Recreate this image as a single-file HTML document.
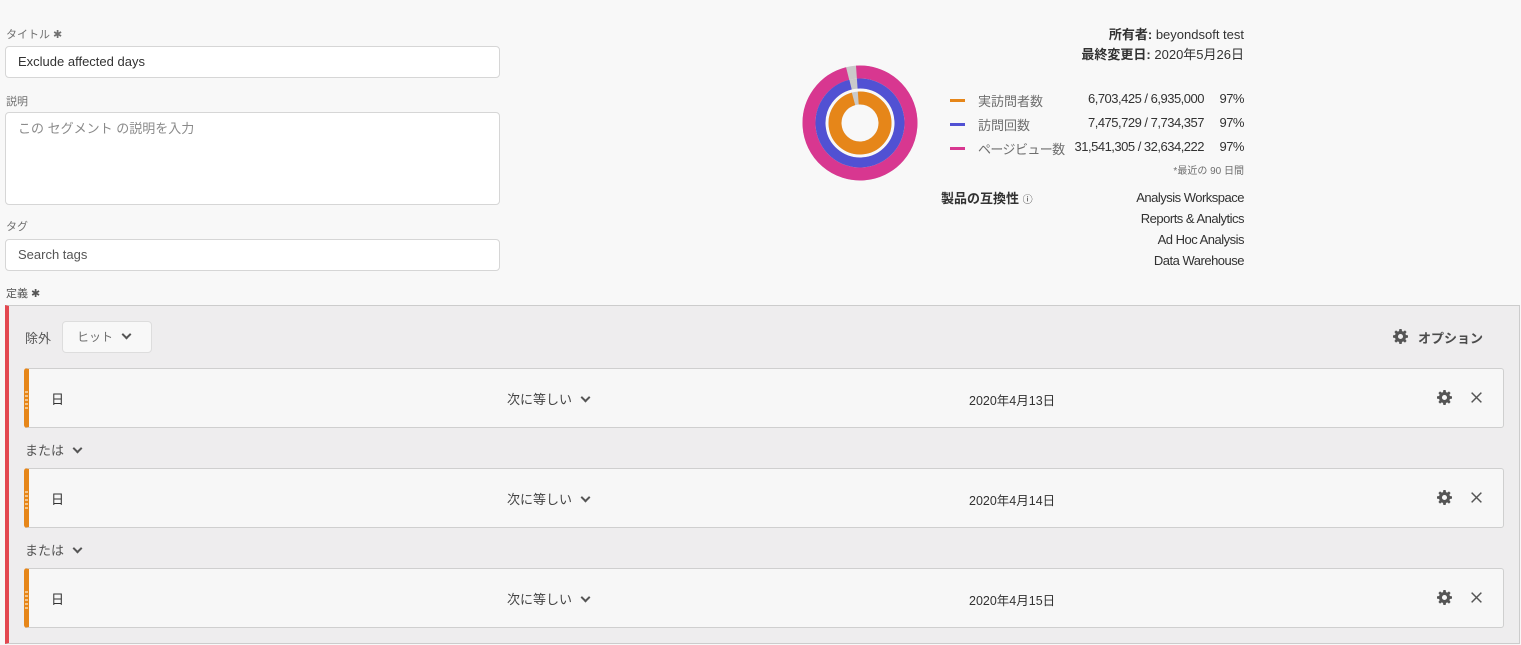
<!DOCTYPE html>
<html><head><meta charset="utf-8"><style>
*{box-sizing:border-box;margin:0;padding:0}
body{width:1521px;height:645px;background:#f8f8f8;font-family:"Liberation Sans","Noto Sans CJK JP",sans-serif;color:#323232;position:relative;overflow:hidden;font-size:13px}
.a{position:absolute}
.lbl{font-size:11px;color:#707070}
.inp{position:absolute;left:5px;width:495px;background:#fff;border:1px solid #d6d6d6;border-radius:4px;font-size:13px;padding-left:12px}
.r{text-align:right}
.n{font-size:13px;letter-spacing:-0.5px}
.box{position:absolute;left:5px;top:305px;width:1515px;height:339px;background:#eeedee;border:1px solid #ccc;border-left:4px solid #e34850}
.row{position:absolute;left:15px;width:1480px;height:60px;background:#f7f7f7;border:1px solid #cfcfcf;border-radius:3px;border-left:5px solid #e68619}
.row .d{position:absolute;left:-4px;top:20px;width:3px;height:20px;background:repeating-linear-gradient(#e68619 0 2px,#f4c48a 2px 4px)}
.row span{position:absolute;top:20px;font-size:13px}
.row svg{position:absolute;top:21px}
.chev{display:inline-block;width:7px;height:7px;border-right:2px solid #555;border-bottom:2px solid #555;transform:rotate(45deg);margin-left:10px;position:relative;top:-3px}
</style></head><body>
<svg width="0" height="0" style="position:absolute"><defs>
<symbol id="g" viewBox="0 0 16 16"><path fill="#555" d="M6.8 0h2.4l.4 2.2 1.3.6 1.9-1.3 1.7 1.7-1.3 1.9.6 1.3 2.2.4v2.4l-2.2.4-.6 1.3 1.3 1.9-1.7 1.7-1.9-1.3-1.3.6-.4 2.2H6.8l-.4-2.2-1.3-.6-1.9 1.3-1.7-1.7 1.3-1.9-.6-1.3L0 9.2V6.8l2.2-.4.6-1.3-1.3-1.9 1.7-1.7 1.9 1.3 1.3-.6zM8 5.3a2.7 2.7 0 100 5.4 2.7 2.7 0 000-5.4z"/></symbol>
<symbol id="x" viewBox="0 0 16 16"><path stroke="#555" stroke-width="1.8" d="M2 2l12 12M14 2L2 14"/></symbol>
</defs></svg>
<div class="a lbl" style="left:6px;top:26px">タイトル ✱</div>
<div class="inp" style="top:46px;height:32px;line-height:30px">Exclude affected days</div>
<div class="a lbl" style="left:6px;top:93px">説明</div>
<div class="inp" style="top:112px;height:93px;padding-top:5px;color:#8a8a8a">この セグメント の説明を入力</div>
<div class="a lbl" style="left:6px;top:218px">タグ</div>
<div class="inp" style="top:239px;height:32px;line-height:30px;color:#555">Search tags</div>
<div class="a lbl" style="left:6px;top:285px;color:#555">定義 ✱</div>

<svg class="a" style="left:800px;top:63px" width="120" height="120" viewBox="0 0 120 120">
<g transform="rotate(-94 60 60)" fill="none">
<circle cx="60" cy="60" r="51" stroke="#cacaca" stroke-width="13"/>
<circle cx="60" cy="60" r="51" stroke="#d83790" stroke-width="13" stroke-dasharray="311 400"/>
<circle cx="60" cy="60" r="39.5" stroke="#cacaca" stroke-width="10"/>
<circle cx="60" cy="60" r="39.5" stroke="#5151d3" stroke-width="10" stroke-dasharray="241 400"/>
<circle cx="60" cy="60" r="25" stroke="#cacaca" stroke-width="13"/>
<circle cx="60" cy="60" r="25" stroke="#e68619" stroke-width="13" stroke-dasharray="152 400"/>
</g></svg>

<div class="a r" style="right:277px;top:24px;font-size:13px"><b>所有者:</b> beyondsoft test</div>
<div class="a r" style="right:277px;top:44px;font-size:13px"><b>最終変更日:</b> 2020年5月26日</div>
<div class="a" style="left:950px;top:99px;width:15px;height:3px;background:#e68619"></div>
<div class="a" style="left:950px;top:123px;width:15px;height:3px;background:#5151d3"></div>
<div class="a" style="left:950px;top:147px;width:15px;height:3px;background:#d83790"></div>
<div class="a" style="left:978px;top:91px;color:#6e6e6e">実訪問者数</div>
<div class="a" style="left:978px;top:115px;color:#6e6e6e">訪問回数</div>
<div class="a" style="left:978px;top:139px;color:#6e6e6e;letter-spacing:-0.6px">ページビュー数</div>
<div class="a r n" style="right:317px;top:91px">6,703,425 / 6,935,000</div>
<div class="a r n" style="right:317px;top:115px">7,475,729 / 7,734,357</div>
<div class="a r n" style="right:317px;top:139px">31,541,305 / 32,634,222</div>
<div class="a r n" style="right:277px;top:91px">97%</div>
<div class="a r n" style="right:277px;top:115px">97%</div>
<div class="a r n" style="right:277px;top:139px">97%</div>
<div class="a r" style="right:277px;top:162px;font-size:10px;color:#6e6e6e">*最近の 90 日間</div>
<div class="a" style="left:941px;top:188px;font-weight:bold">製品の互換性 <span style="font-weight:normal;font-size:10px">ⓘ</span></div>
<div class="a r n" style="right:277px;top:187px;line-height:21px">Analysis Workspace<br>Reports &amp; Analytics<br>Ad Hoc Analysis<br>Data Warehouse</div>

<div class="box">
<div class="a" style="left:16px;top:22px;color:#555;font-size:13px">除外</div>
<div class="a" style="left:53px;top:15px;width:90px;height:32px;background:#f8f8f8;border:1px solid #ddd;border-radius:4px;line-height:30px;padding-left:14px;color:#6e6e6e;font-size:12px">ヒット<i class="chev"></i></div>
<svg class="a" style="left:1384px;top:23px" width="15" height="15"><use href="#g"/></svg>
<div class="a" style="left:1409px;top:22px;font-size:13px;font-weight:bold;color:#4b4b4b">オプション</div>

<div class="row" style="top:62px"><div class="d"></div><span style="left:22px">日</span><span style="left:478px;color:#444">次に等しい<i class="chev"></i></span><span style="left:940px;font-size:12.5px;top:21px">2020年4月13日</span><svg style="left:1408px" width="15" height="15"><use href="#g"/></svg><svg style="left:1441px;top:22px" width="13" height="13"><use href="#x"/></svg></div>
<div class="a" style="left:16px;top:134px;color:#555">または<i class="chev"></i></div>
<div class="row" style="top:162px"><div class="d"></div><span style="left:22px">日</span><span style="left:478px;color:#444">次に等しい<i class="chev"></i></span><span style="left:940px;font-size:12.5px;top:21px">2020年4月14日</span><svg style="left:1408px" width="15" height="15"><use href="#g"/></svg><svg style="left:1441px;top:22px" width="13" height="13"><use href="#x"/></svg></div>
<div class="a" style="left:16px;top:234px;color:#555">または<i class="chev"></i></div>
<div class="row" style="top:262px"><div class="d"></div><span style="left:22px">日</span><span style="left:478px;color:#444">次に等しい<i class="chev"></i></span><span style="left:940px;font-size:12.5px;top:21px">2020年4月15日</span><svg style="left:1408px" width="15" height="15"><use href="#g"/></svg><svg style="left:1441px;top:22px" width="13" height="13"><use href="#x"/></svg></div>
</div>
</body></html>
